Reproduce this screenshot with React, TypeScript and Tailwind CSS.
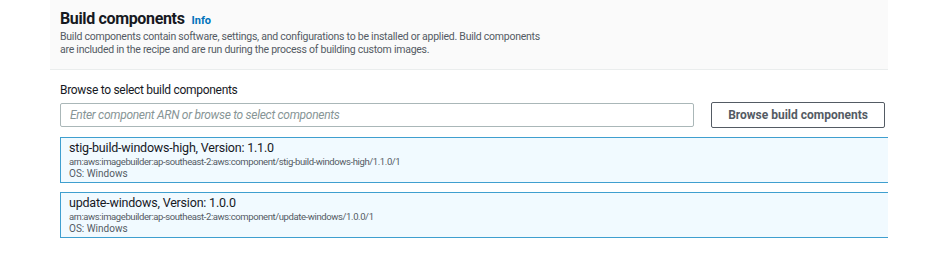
const components = [
  {
    name: 'stig-build-windows-high',
    version: '1.1.0',
    arn: 'arn:aws:imagebuilder:ap-southeast-2:aws:component/stig-build-windows-high/1.1.0/1',
    os: 'Windows',
  },
  {
    name: 'update-windows',
    version: '1.0.0',
    arn: 'arn:aws:imagebuilder:ap-southeast-2:aws:component/update-windows/1.0.0/1',
    os: 'Windows',
  },
];

export default function App() {
  return (
    <div className="w-[938px] h-[253px] bg-white overflow-hidden font-['Roboto',sans-serif] text-[#16191f]">
      <div className="ml-[50px] w-[838px] overflow-hidden">
        <div className="bg-[#fafafa] border-b border-[#eaeded] pl-[10px] pt-[8px] pb-[13px]">
          <div className="flex items-baseline gap-[7px]">
            <h2 className="text-[16px] leading-[22px] font-bold tracking-[-0.35px]">Build components</h2>
            <a href="#" className="text-[11px] font-bold text-[#0073bb]">Info</a>
          </div>
          <p className="text-[10.5px] leading-[13px] text-[#545b64] whitespace-nowrap tracking-[-0.25px]">
            Build components contain software, settings, and configurations to be installed or applied. Build components
            <br />
            are included in the recipe and are run during the process of building custom images.
          </p>
        </div>

        <div className="pl-[10px] pt-[12px]">
          <div className="text-[12px] leading-[16px] mb-[4px] tracking-[-0.3px]">Browse to select build components</div>
          <div className="flex items-center gap-[17px]">
            <input
              className="w-[634px] h-[24px] border border-[#aab7b8] rounded-[2px] px-[9px] text-[12px] italic tracking-[-0.3px] placeholder:text-[#879596] outline-none"
              placeholder="Enter component ARN or browse to select components"
            />
            <button className="w-[174px] h-[26px] border border-[#545b64] rounded-[2px] text-[12px] font-bold text-[#545b64] bg-white">
              Browse build components
            </button>
          </div>

          <div className="mt-[9px] flex flex-col gap-[9px] w-[900px]">
            {components.map((c) => (
              <div key={c.name} className="bg-[#f1faff] border border-[#3f9fcf] pl-[8px] pt-[2px] pb-[2px]">
                <div className="text-[12.5px] leading-[16px] tracking-[-0.2px]">
                  {c.name}, Version: {c.version}
                </div>
                <div className="text-[9.5px] leading-[12px] text-[#545b64] tracking-[-0.4px]">{c.arn}</div>
                <div className="text-[10px] leading-[12px] text-[#545b64]">OS: {c.os}</div>
              </div>
            ))}
          </div>
        </div>
      </div>
    </div>
  );
}
